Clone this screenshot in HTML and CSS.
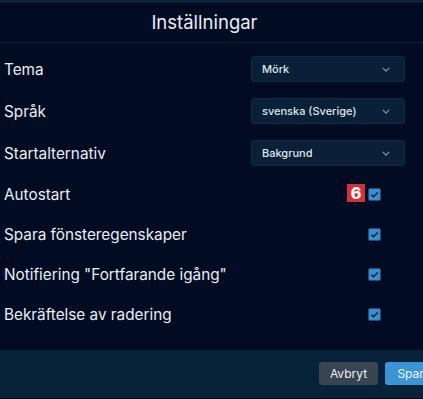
FILE: index.html
```html
<!DOCTYPE html>
<html lang="sv">
<head>
  <meta charset="UTF-8" />
  <title>Inställningar</title>
  <link rel="stylesheet" href="styles.css">
</head>
<body>
  <div class="dialog">
    <div class="topstrip"></div>
    <div class="header">Inställningar</div>

    <div class="content">
      <div class="row row-select">
        <span class="label">Tema</span>
        <div class="control">
          <div class="select"><span>Mörk</span><svg class="chev" viewBox="0 0 10 6"><path d="M1 1l4 4 4-4"/></svg></div>
        </div>
      </div>
      <div class="row row-select">
        <span class="label">Språk</span>
        <div class="control">
          <div class="select"><span>svenska (Sverige)</span><svg class="chev" viewBox="0 0 10 6"><path d="M1 1l4 4 4-4"/></svg></div>
        </div>
      </div>
      <div class="row row-select">
        <span class="label">Startalternativ</span>
        <div class="control">
          <div class="select"><span>Bakgrund</span><svg class="chev" viewBox="0 0 10 6"><path d="M1 1l4 4 4-4"/></svg></div>
        </div>
      </div>
      <div class="row">
        <span class="label">Autostart</span>
        <div class="control">
          <span class="check"><span class="badge">6</span><svg viewBox="0 0 12 12"><path d="M2.6 6.2l2.3 2.2 4.6-4.7"/></svg></span>
        </div>
      </div>
      <div class="row">
        <span class="label">Spara fönsteregenskaper</span>
        <div class="control">
          <span class="check"><svg viewBox="0 0 12 12"><path d="M2.6 6.2l2.3 2.2 4.6-4.7"/></svg></span>
        </div>
      </div>
      <div class="row">
        <span class="label">Notifiering "Fortfarande igång"</span>
        <div class="control">
          <span class="check"><svg viewBox="0 0 12 12"><path d="M2.6 6.2l2.3 2.2 4.6-4.7"/></svg></span>
        </div>
      </div>
      <div class="row">
        <span class="label">Bekräftelse av radering</span>
        <div class="control">
          <span class="check"><svg viewBox="0 0 12 12"><path d="M2.6 6.2l2.3 2.2 4.6-4.7"/></svg></span>
        </div>
      </div>
    </div>

    <div class="footer">
      <button class="btn btn-cancel">Avbryt</button>
      <button class="btn btn-save">Spara</button>
    </div>
  </div>
</body>
</html>
```

FILE: styles.css
```css
* {
  box-sizing: border-box;
  margin: 0;
  padding: 0;
}

html, body {
  width: 423px;
  height: 399px;
  overflow: hidden;
}

body {
  background: #010b22;
  font-family: 'Inter', 'Noto Sans', sans-serif;
  color: #e6ecf3;
}

.dialog {
  display: flex;
  flex-direction: column;
  height: 399px;
  background: #010b22;
}

.topstrip {
  height: 3px;
  background: #0b2239;
}

.header {
  height: 40px;
  display: flex;
  align-items: center;
  justify-content: center;
  font-size: 18.5px;
  color: #e8eef5;
  border-bottom: 1px solid #0b1c33;
  padding: 0 14px 1px 0;
}

.content {
  padding: 5px 18px 16px 4px;
}

.row {
  height: 40px;
  display: flex;
  align-items: center;
}

.row-select {
  height: 42px;
}

.label {
  flex: 1;
  font-size: 15.3px;
  color: #e8eef4;
}

.control {
  width: 154px;
  display: flex;
  align-items: center;
}

.select {
  width: 154px;
  height: 26px;
  background: #0a2036;
  border: 1px solid #112a42;
  border-radius: 3px;
  display: flex;
  align-items: center;
  justify-content: space-between;
  padding: 0 14px 0 10px;
  font-size: 11px;
  font-weight: 500;
  color: #dfe6ee;
}

.chev {
  width: 8px;
  height: 5px;
  fill: none;
  stroke: #8a99a8;
  stroke-width: 1.4;
}

.check {
  position: relative;
  margin-left: 117px;
  width: 13px;
  height: 13px;
  background: #3a8ed0;
  border: 1px solid #1a4d7a;
  border-radius: 2px;
  display: flex;
  align-items: center;
  justify-content: center;
}

.check svg {
  width: 11px;
  height: 11px;
  fill: none;
  stroke: #0a1a30;
  stroke-width: 1.6;
}

.badge {
  position: absolute;
  left: -22px;
  top: -5px;
  width: 18px;
  height: 18px;
  background: #d2313c;
  color: #fff;
  font-weight: 800;
  font-size: 16px;
  display: flex;
  align-items: center;
  justify-content: center;
}

.footer {
  flex: 1;
  background: #08223a;
  border-bottom: 1px solid #010814;
  display: flex;
  align-items: flex-start;
  justify-content: flex-end;
  padding-top: 12px;
  gap: 7px;
}

.btn {
  height: 23px;
  border: none;
  border-radius: 3px;
  font-family: inherit;
  font-size: 12px;
  color: #e8eef4;
}

.btn-cancel {
  width: 59px;
  background: #394452;
}

.btn-save {
  width: 58px;
  background: #3a94d6;
  color: #f2f7fb;
  margin-right: -20px;
}
```
